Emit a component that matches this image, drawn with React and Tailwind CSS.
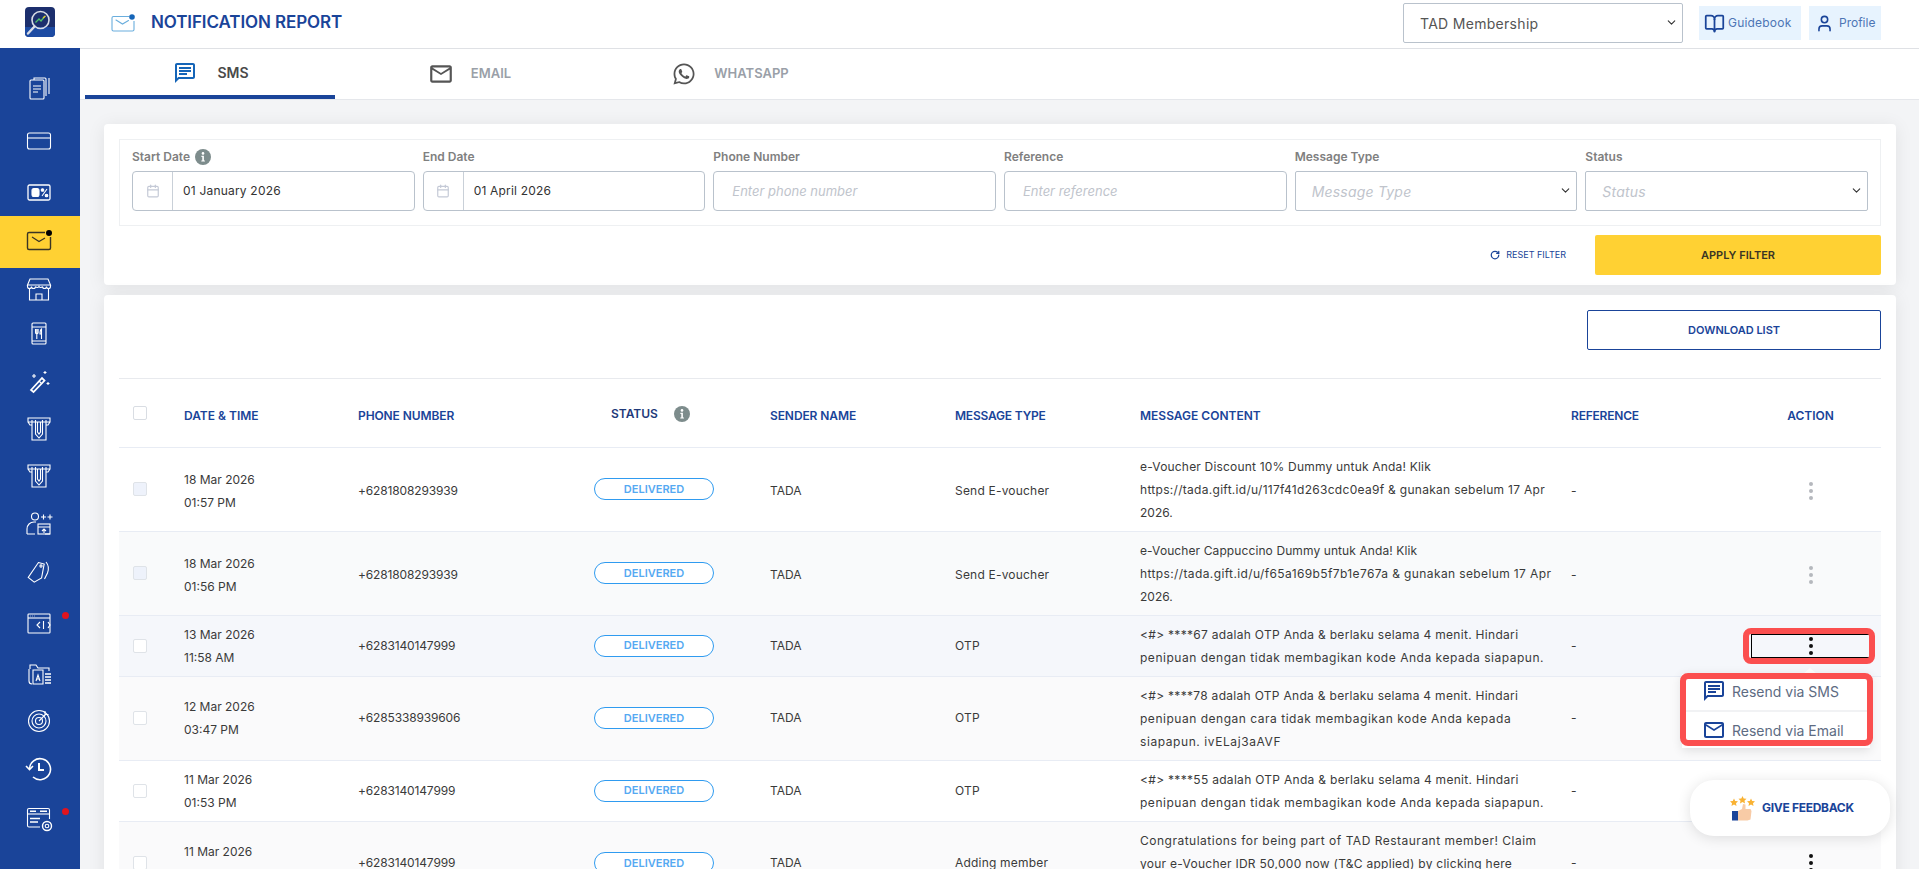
import { BookOpen, Calendar, ChevronDown, RotateCw, User } from "lucide-react";
import { FaWhatsapp } from "react-icons/fa";

const chatPath =
  "M20 2H4c-1.1 0-2 .9-2 2v18l4-4h14c1.1 0 2-.9 2-2V4c0-1.1-.9-2-2-2zm0 14H5.2L4 17.2V4h16v12zM6 12h8v2H6zM6 9h12v2H6zM6 6h12v2H6z";
const mailPath =
  "M20 4H4c-1.1 0-2 .9-2 2v12c0 1.1.9 2 2 2h16c1.1 0 2-.9 2-2V6c0-1.1-.9-2-2-2zm0 14H4V8l8 5 8-5v10zm-8-7L4 6h16l-8 5z";

function ChatIcon({ className }) {
  return (
    <svg viewBox="0 0 24 24" className={className} fill="currentColor">
      <path d={chatPath} fillRule="evenodd" />
    </svg>
  );
}

function MailIcon({ className }) {
  return (
    <svg viewBox="0 0 24 24" className={className} fill="currentColor">
      <path d={mailPath} />
    </svg>
  );
}

function InfoIcon({ className }) {
  return (
    <svg viewBox="0 0 16 16" className={className}>
      <circle cx="8" cy="8" r="8" fill="#7d8c8c" />
      <circle cx="8" cy="4.4" r="1.3" fill="#fff" />
      <path d="M6.4 6.8h2.5v4.6h1v1.2H6.3v-1.2h1V8H6.4z" fill="#fff" />
    </svg>
  );
}

function NotifMail({ stroke, dot, className }) {
  return (
    <svg viewBox="0 0 24 18" className={className} fill="none" stroke={stroke} strokeWidth="1.1">
      <path d="M18 2.5H2.5A1.5 1.5 0 0 0 1 4v11.5A1.5 1.5 0 0 0 2.5 17h19a1.5 1.5 0 0 0 1.500-1.500V7" />
      <path d="M5 6l6.500 4 6-3.500" strokeLinecap="round" />
      <circle cx="21" cy="3" r="2.800" fill={dot} stroke="none" />
    </svg>
  );
}

// Sidebar drawings, all on a 28 by 28 box
const sideIcons = [
  <>
    <rect x="5" y="6" width="14" height="19" rx="1" />
    <path d="M8 12h8M8 15h8M8 18h5" />
    <path d="M9 6V4h11a1 1 0 0 1 1 1v17M24 4v16" />
  </>,
  <>
    <rect x="2.500" y="6" width="23" height="16" rx="2" />
    <path d="M2.500 11h23" />
  </>,
  <>
    <rect x="3" y="7" width="22" height="15" rx="1.500" strokeWidth="1.300" />
    <rect x="7" y="10.500" width="7" height="8" rx="2" fill="#fff" />
    <path d="M17 18l5-7" />
    <circle cx="17.500" cy="12" r="1.300" fill="#fff" />
    <circle cx="21.500" cy="17.500" r="1.300" fill="#fff" />
  </>,
  <>
    <path d="M20 4.500H4A1.500 1.500 0 0 0 2.500 6v14A1.500 1.500 0 0 0 4 21.500h20a1.500 1.500 0 0 0 1.500-1.500V9" stroke="#3b3524" strokeWidth="1.400" />
    <path d="M7 9l7 4.500 6-3.500" stroke="#3b3524" strokeWidth="1.200" />
    <circle cx="24" cy="5" r="3" fill="#000" stroke="none" />
  </>,
  <>
    <path d="M5 4h18l2.500 6h-23zM2.500 10v1.500a2 2 0 0 0 4 0 2 2 0 0 0 4 0 2 2 0 0 0 3.500 0 2 2 0 0 0 3.500 0 2 2 0 0 0 4 0 2 2 0 0 0 4 0V10" />
    <path d="M4.500 14v11h19V14M11 25v-6h6v6" />
  </>,
  <>
    <rect x="7" y="3" width="14" height="21" rx="1" />
    <path d="M7 7h14M7 21h14M10.500 9v3.500a1.300 1.300 0 0 0 2.600 0V9M11.800 9v10M16.500 19V9c-1.500 1-1.500 4-1.500 5h1.500" />
  </>,
  <>
    <path d="M6 23l11-12 2.500 2.500L8.500 25z" strokeWidth="1.800" />
    <path d="M14 14l2.500 2.500" />
    <path d="M9 7v4M7 9h4M20 4v3M18.500 5.500h3M23 15v3M21.500 16.500h3" />
  </>,
  <>
    <path d="M3 4h22v4H3zM3 8l2 3h2M25 8l-2 3h-2" />
    <path d="M7 6v20h14V6" />
    <path d="M10.500 6v14l3.500 4 3.500-4V6M12.500 8v10l1.500 2 1.500-2V8" />
  </>,
  <>
    <path d="M3 4h22v4H3zM3 8l2 3h2M25 8l-2 3h-2" />
    <path d="M7 6v20h14V6" />
    <path d="M10.500 6v14l3.500 4 3.500-4V6M12.500 8v10l1.500 2 1.500-2V8" />
  </>,
  <>
    <circle cx="10" cy="7.500" r="3.500" />
    <path d="M2 25v-5c0-4 3-7 7-7h2M2 25h8M20 25h5" />
    <path d="M16 8h5M18.500 5.500v5M22.500 8h5M25 5.500v5" />
    <rect x="13" y="15" width="12" height="10" />
    <path d="M13 18h12M19 24v-4M17 22l2-2 2 2" />
  </>,
  <>
    <path d="M11 5h6v1l1 13-6 6-7-3z" transform="rotate(15 14 14)" />
    <circle cx="16" cy="8" r="1.100" />
    <path d="M21 4c2.500 3 3 7 1.500 11l-3 6" />
  </>,
  <>
    <rect x="3" y="5" width="22" height="19" rx="0.800" />
    <path d="M3 9h22" />
    <path d="M5 7h0.500M7 7h0.500M9 7h0.500" />
    <path d="M15 13l-3 3 3 3M23 13l2 3-2 3M18.500 12l0 8" />
  </>,
  <>
    <path d="M5 10V6h6l2 3h11v3M7 25a3 3 0 0 1-3-3V10" />
    <path d="M8 11h4l6 0v14H8z" />
    <path d="M11 22l2-6 2 6M11.700 20h2.600" />
    <path d="M20 15h6M20 18h6M20 21h6M20 24h6" strokeWidth="1.300" />
  </>,
  <>
    <circle cx="14" cy="14" r="10.500" />
    <circle cx="14" cy="14" r="7" />
    <circle cx="14" cy="14" r="3.500" />
    <path d="M14 14l7-7M20 4v3.500h3.500" />
  </>,
  <>
    <path d="M4.500 14A10.500 10.500 0 1 1 8 22" strokeWidth="1.600" />
    <path d="M1 11l3.500 3.500L8 11" strokeWidth="1.600" />
    <path d="M14 8v7h5" strokeWidth="2" />
  </>,
  <>
    <path d="M15 22H4a1.500 1.500 0 0 1-1.500-1.500V5A1.500 1.500 0 0 1 4 3.500h19A1.500 1.500 0 0 1 24.500 5v9" />
    <path d="M2.500 9h22" />
    <path d="M5 6.200h6M15 6.200h7M5 13.500h10M5 17h8" strokeWidth="1.500" />
    <circle cx="22" cy="21" r="4.500" strokeWidth="1.400" />
    <circle cx="22" cy="21" r="1.800" />
  </>,
];

const sideItems = [
  { h: "h-[54px]" },
  { h: "h-[52px]" },
  { h: "h-[49px]" },
  { h: "h-[52px]", active: true },
  { h: "h-[42px]" },
  { h: "h-[48px]" },
  { h: "h-[46px]" },
  { h: "h-[47px]" },
  { h: "h-[48px]" },
  { h: "h-[48px]" },
  { h: "h-[50px]" },
  { h: "h-[52px]", dot: true },
  { h: "h-[48px]" },
  { h: "h-[47px]" },
  { h: "h-[49px]" },
  { h: "h-[52px]", dot: true },
];

const rows = [
  {
    date: "18 Mar 2026",
    time: "01:57 PM",
    phone: "+6281808293939",
    type: "Send E-voucher",
    lines: [
      ["e-Voucher Discount 10% Dummy untuk Anda! Klik", "tracking-[0.19px]"],
      ["https://tada.gift.id/u/117f41d263cdc0ea9f & gunakan sebelum 17 Apr", "tracking-[0.29px]"],
      ["2026.", ""],
    ],
    height: "h-[84px]",
    bg: "bg-white",
    nudge: "pt-[3px]",
    disabled: true,
  },
  {
    date: "18 Mar 2026",
    time: "01:56 PM",
    phone: "+6281808293939",
    type: "Send E-voucher",
    lines: [
      ["e-Voucher Cappuccino Dummy untuk Anda! Klik", "tracking-[0.1px]"],
      ["https://tada.gift.id/u/f65a169b5f7b1e767a & gunakan sebelum 17 Apr", "tracking-[0.38px]"],
      ["2026.", ""],
    ],
    height: "h-[84px]",
    bg: "bg-[#f9fafb]",
    nudge: "pt-[3px]",
    disabled: true,
  },
  {
    date: "13 Mar 2026",
    time: "11:58 AM",
    phone: "+6283140147999",
    type: "OTP",
    lines: [
      ["<#> ****67 adalah OTP Anda & berlaku selama 4 menit. Hindari", "tracking-[0.3px]"],
      ["penipuan dengan tidak membagikan kode Anda kepada siapapun.", "tracking-[0.52px]"],
    ],
    height: "h-[61px]",
    bg: "bg-[#f5f7fb]",
    nudge: "",
    open: true,
  },
  {
    date: "12 Mar 2026",
    time: "03:47 PM",
    phone: "+6285338939606",
    type: "OTP",
    lines: [
      ["<#> ****78 adalah OTP Anda & berlaku selama 4 menit. Hindari", "tracking-[0.3px]"],
      ["penipuan dengan cara tidak membagikan kode Anda kepada", "tracking-[0.52px]"],
      ["siapapun. ivELaj3aAVF", "tracking-[0.58px]"],
    ],
    height: "h-[84px]",
    bg: "bg-[#fafafb]",
    nudge: "",
  },
  {
    date: "11 Mar 2026",
    time: "01:53 PM",
    phone: "+6283140147999",
    type: "OTP",
    lines: [
      ["<#> ****55 adalah OTP Anda & berlaku selama 4 menit. Hindari", "tracking-[0.3px]"],
      ["penipuan dengan tidak membagikan kode Anda kepada siapapun.", "tracking-[0.52px]"],
    ],
    height: "h-[61px]",
    bg: "bg-white",
    nudge: "",
  },
  {
    date: "11 Mar 2026",
    time: "\u00a0",
    phone: "+6283140147999",
    type: "Adding member",
    lines: [
      ["Congratulations for being part of TAD Restaurant member! Claim", "tracking-[0.5px]"],
      ["your e-Voucher IDR 50,000 now (T&C applied) by clicking here", "tracking-[0.27px]"],
      ["\u00a0", ""],
    ],
    height: "h-[84px]",
    bg: "bg-[#fafafb]",
    nudge: "",
  },
];

function Dots({ muted }) {
  const color = muted ? "bg-[#b5b8bd]" : "bg-[#111]";
  return (
    <span className="flex flex-col items-center gap-[3px]">
      <span className={`w-[4px] h-[4px] rounded-full ${color}`} />
      <span className={`w-[4px] h-[4px] rounded-full ${color}`} />
      <span className={`w-[4px] h-[4px] rounded-full ${color}`} />
    </span>
  );
}

function Sidebar() {
  return (
    <aside className="w-[80px] h-full shrink-0 flex flex-col bg-[#1a4499]">
      <div className="h-[48px] shrink-0 bg-white flex items-center justify-center">
        <svg viewBox="0 0 30 30" className="w-[30px] h-[30px] -ml-[1px] -mt-[4px]">
          <rect width="30" height="30" rx="4" fill="#1c2f6d" />
          <path d="M0 20h30v6a4 4 0 0 1-4 4H4a4 4 0 0 1-4-4z" fill="#1d4ba3" />
          <circle cx="15.500" cy="13" r="8.500" fill="none" stroke="#d9dde6" strokeWidth="1.600" />
          <path d="M9.500 19.500l-6.500 7" stroke="#d9dde6" strokeWidth="2.400" strokeLinecap="round" />
          <path d="M10.500 15.500l3.500-3.500 2 2 4-5" fill="none" stroke="#4fc26b" strokeWidth="1.300" />
          <path d="M18 11l2.500-2" stroke="#f2c530" strokeWidth="1.300" />
        </svg>
      </div>
      <nav className="pt-[13px] flex flex-col">
        {sideItems.map((item, i) => (
          <div
            key={i}
            className={`relative shrink-0 flex items-center justify-center ${item.h} ${
              item.active ? "bg-[#ffd133]" : ""
            }`}
          >
            <svg
              viewBox="0 0 28 28"
              className="w-[28px] h-[28px] -ml-[2px]"
              fill="none"
              stroke="#fff"
              strokeWidth="1.100"
            >
              {sideIcons[i]}
            </svg>
            {item.dot && (
              <span className="absolute left-[62px] top-[15px] w-[7px] h-[7px] rounded-full bg-[#e0141e]" />
            )}
          </div>
        ))}
      </nav>
    </aside>
  );
}

function Header() {
  return (
    <header className="h-[49px] shrink-0 bg-white border-b border-[#dfe1e5] flex items-center pl-[31px] pr-[38px] pb-[2px]">
      <NotifMail stroke="#6aaedd" dot="#1565b8" className="w-[24px] h-[18px]" />
      <h1 className="ml-[16px] text-[17px] font-semibold tracking-[-0.1px] text-[#1a4499]">
        NOTIFICATION REPORT
      </h1>
      <div className="ml-auto relative w-[280px] h-[40px]">
        <select className="w-full h-full appearance-none bg-white border border-[#b9c2cc] rounded-[2px] pl-[16px] text-[14px] tracking-[0.3px] text-[#555]">
          <option>TAD Membership</option>
        </select>
        <ChevronDown className="absolute right-[5px] top-[13px] w-[13px] h-[13px] text-[#333] pointer-events-none" />
      </div>
      <div className="ml-[16px] flex items-center h-[34px] w-[102px] bg-[#e7f3fe] pl-[5px] text-[12px] tracking-[0.2px] text-[#4d75b5] gap-[3px]">
        <BookOpen className="w-[21px] h-[21px] text-[#1a4499]" />
        Guidebook
      </div>
      <div className="ml-[8px] flex items-center h-[34px] w-[72px] bg-[#e7f3fe] pl-[6px] text-[12px] text-[#4d75b5] gap-[5px]">
        <User className="w-[19px] h-[19px] text-[#1a4499]" />
        Profile
      </div>
    </header>
  );
}

function Tabs() {
  return (
    <div className="h-[51px] shrink-0 bg-white border-b border-[#e5e7eb] flex pl-[5px] gap-[11px]">
      <div className="w-[250px] h-[50px] border-b-4 border-[#1a4499] flex items-center justify-center gap-[20px] pl-[2px] text-[14px] font-semibold text-[#4a4a4a] pt-[1px]">
        <ChatIcon className="w-[24px] h-[24px] text-[#1565b8]" />
        SMS
      </div>
      <div className="w-[250px] h-[50px] flex items-center justify-center gap-[17px] pr-[3px] pb-[1px] text-[13px] font-semibold text-[#9a9fa8]">
        <MailIcon className="w-[26px] h-[26px] text-[#555]" />
        EMAIL
      </div>
      <div className="w-[250px] h-[50px] flex items-center justify-center gap-[18px] pr-[3px] pb-[1px] text-[13px] font-semibold text-[#9a9fa8]">
        <FaWhatsapp className="w-[24px] h-[24px] text-[#555]" />
        WHATSAPP
      </div>
    </div>
  );
}

function DateField({ label, value, info }) {
  return (
    <div>
      <div className="h-[18px] mb-[5px] flex items-center gap-[5px] text-[12px] font-semibold text-[#808080]">
        {label}
        {info && <InfoIcon className="w-[16px] h-[16px]" />}
      </div>
      <div className="h-[40px] flex border border-[#b9c2cc] rounded-[4px]">
        <span className="w-[40px] shrink-0 border-r border-[#c9d0d8] flex items-center justify-center">
          <Calendar className="w-[14px] h-[14px] text-[#c4c9d6]" />
        </span>
        <input
          readOnly
          value={value}
          className="flex-1 min-w-0 pl-[10px] text-[12px] tracking-[0.2px] text-[#333] outline-none bg-transparent"
        />
      </div>
    </div>
  );
}

function TextField({ label, placeholder }) {
  return (
    <div>
      <div className="h-[18px] mb-[5px] flex items-center text-[12px] font-semibold text-[#808080]">
        {label}
      </div>
      <input
        placeholder={placeholder}
        className="w-full h-[40px] border border-[#b9c2cc] rounded-[4px] pl-[18px] text-[13px] italic placeholder:text-[#c0c4cc] outline-none"
      />
    </div>
  );
}

function SelectField({ label, placeholder }) {
  return (
    <div>
      <div className="h-[18px] mb-[5px] flex items-center text-[12px] font-semibold text-[#808080]">
        {label}
      </div>
      <div className="relative h-[40px]">
        <select className="w-full h-full appearance-none bg-white border border-[#b9c2cc] rounded-[2px] pl-[16px] text-[14px] tracking-[0.2px] italic text-[#c0c4cc]">
          <option>{placeholder}</option>
        </select>
        <ChevronDown className="absolute right-[5px] top-[13px] w-[13px] h-[13px] text-[#333] pointer-events-none" />
      </div>
    </div>
  );
}

function Filters() {
  return (
    <section className="h-[161px] shrink-0 bg-white rounded-[4px] shadow-[0_2px_18px_rgba(0,0,0,0.08)] px-[15px] pt-[15px]">
      <div className="h-[87px] border border-[#eef0f2] px-[12px] pt-[8px] grid grid-cols-6 gap-[8px]">
        <DateField label="Start Date" value="01 January 2026" info />
        <DateField label="End Date" value="01 April 2026" />
        <TextField label="Phone Number" placeholder="Enter phone number" />
        <TextField label="Reference" placeholder="Enter reference" />
        <SelectField label="Message Type" placeholder="Message Type" />
        <SelectField label="Status" placeholder="Status" />
      </div>
      <div className="mt-[9px] flex justify-end items-center">
        <span className="flex items-center gap-[6px] text-[9px] text-[#1a4499] mr-[29px]">
          <RotateCw className="w-[10px] h-[10px]" strokeWidth={3} />
          RESET FILTER
        </span>
        <button className="w-[286px] h-[40px] bg-[#ffd133] rounded-[2px] text-[11px] font-semibold text-[#3b3524]">
          APPLY FILTER
        </button>
      </div>
    </section>
  );
}

function ReportTable() {
  return (
    <table className="w-full table-fixed border-collapse text-[12px] text-[#3a3a3a]">
      <colgroup>
        <col className="w-[65px]" />
        <col className="w-[174px]" />
        <col className="w-[236px]" />
        <col className="w-[176px]" />
        <col className="w-[185px]" />
        <col className="w-[185px]" />
        <col className="w-[431px]" />
        <col className="w-[169px]" />
        <col className="w-[141px]" />
      </colgroup>
      <thead>
        <tr className="h-[68px] border-b border-[#e8ecf4] text-left text-[12px] font-semibold text-[#1a4499]">
          <th className="pl-[14px] pt-[6px] font-semibold">
            <span className="block w-[14px] h-[14px] border border-[#d9dde3] rounded-[2px] -mt-[5px]" />
          </th>
          <th className="pt-[6px] font-semibold">DATE &amp; TIME</th>
          <th className="pt-[6px] font-semibold tracking-[-0.1px]">PHONE NUMBER</th>
          <th className="pt-[6px] font-semibold">
            <span className="flex items-center gap-[16px] pl-[17px] -mt-[3px] text-[#1f3a7a]">
              STATUS
              <InfoIcon className="w-[16px] h-[16px]" />
            </span>
          </th>
          <th className="pt-[6px] font-semibold tracking-[-0.1px]">SENDER NAME</th>
          <th className="pt-[6px] font-semibold tracking-[-0.2px]">MESSAGE TYPE</th>
          <th className="pt-[6px] font-semibold">MESSAGE CONTENT</th>
          <th className="pt-[6px] font-semibold tracking-[-0.2px]">REFERENCE</th>
          <th className="pt-[6px] font-semibold text-center">ACTION</th>
        </tr>
      </thead>
      <tbody>
        {rows.map((row, i) => (
          <tr key={i} className={`${row.height} ${row.bg} border-b border-[#e8ecf4]`}>
            <td className="pl-[14px]">
              <span
                className={`block w-[14px] h-[14px] border border-[#dfe3e8] rounded-[2px] ${
                  row.disabled ? "bg-[#eef2fb]" : "bg-white"
                }`}
              />
            </td>
            <td className={`leading-[23px] ${row.nudge}`}>
              <div>{row.date}</div>
              <div>{row.time}</div>
            </td>
            <td className={`tracking-[-0.15px] ${row.nudge}`}>{row.phone}</td>
            <td>
              <span className="flex items-center justify-center w-[120px] h-[22px] border border-[#2f9bf0] rounded-full bg-white text-[11px] font-semibold text-[#55a9f2]">
                DELIVERED
              </span>
            </td>
            <td className={row.nudge}>TADA</td>
            <td className={`tracking-[0.2px] ${row.nudge}`}>{row.type}</td>
            <td className="leading-[23px] whitespace-nowrap">
              {row.lines.map(([text, track], j) => (
                <div key={j} className={track}>
                  {text}
                </div>
              ))}
            </td>
            <td className={row.nudge}>-</td>
            <td className={`text-center ${row.nudge}`}>
              <span
                className={`mx-auto flex items-center justify-center ${
                  row.open ? "w-[120px] h-[24px] border border-black" : ""
                }`}
              >
                <Dots muted={row.disabled} />
              </span>
            </td>
          </tr>
        ))}
      </tbody>
    </table>
  );
}

function ResendMenu() {
  return (
    <>
      {/* red marks drawn over the screenshot */}
      <div className="absolute left-[1743px] top-[628px] w-[132px] h-[36px] border-[6px] border-[#fb4f4f] rounded-[8px]" />
      <div className="absolute left-[1803px] top-[668px] w-0 h-0 border-x-[7px] border-x-transparent border-b-[6px] border-b-white" />
      <div className="absolute left-[1682px] top-[674px] w-[188px] h-[74px] bg-white shadow-[0_2px_10px_rgba(0,0,0,0.12)] text-[14px] text-[#5d6b82] overflow-hidden">
        <div className="h-[38px] pb-[2px] border-b-2 border-[#f1f2f4] flex items-center pl-[20px] gap-[6px]">
          <ChatIcon className="w-[24px] h-[24px] text-[#1a4499]" />
          Resend via SMS
        </div>
        <div className="h-[36px] flex items-center pl-[20px] gap-[6px]">
          <MailIcon className="w-[24px] h-[24px] text-[#1a4499]" />
          Resend via Email
        </div>
      </div>
      <div className="absolute left-[1680px] top-[673px] w-[193px] h-[73px] border-[6px] border-[#fb4f4f] rounded-[8px]" />
    </>
  );
}

function Feedback() {
  return (
    <div className="absolute left-[1690px] top-[780px] w-[200px] h-[56px] bg-white rounded-[24px] shadow-[0_2px_14px_rgba(0,0,0,0.12)] flex items-center pl-[40px] gap-[7px]">
      <svg viewBox="0 0 25 25" className="w-[25px] h-[25px]">
        <g fill="#f9b233">
          <polygon points="4,2.500 5.200,5 8,5.300 6,7.200 6.500,10 4,8.600 1.500,10 2,7.200 0,5.300 2.800,5" />
          <polygon points="12.500,0 13.700,2.500 16.500,2.800 14.500,4.700 15,7.500 12.500,6.100 10,7.500 10.500,4.700 8.500,2.800 11.300,2.500" />
          <polygon points="21,2.500 22.200,5 25,5.300 23,7.200 23.500,10 21,8.600 18.500,10 19,7.200 17,5.300 19.800,5" />
        </g>
        <rect x="2" y="15" width="6" height="9.500" fill="#1a4499" />
        <path d="M8 15l4-2 1-5 2.500.5v4.500h5l1 2-1 8.500-3 1H8z" fill="#f8cba6" />
      </svg>
      <span className="text-[12px] font-bold text-[#1a4499] tracking-[-0.3px]">GIVE FEEDBACK</span>
    </div>
  );
}

export default function App() {
  return (
    <div className="relative flex h-screen overflow-hidden bg-[#f3f4f6] [font-family:Inter,sans-serif]">
      <Sidebar />
      <main className="flex-1 min-w-0 h-full flex flex-col">
        <Header />
        <Tabs />
        <div className="flex-1 min-h-0 overflow-hidden pl-[24px] pr-[23px] pt-[24px] flex flex-col gap-[10px]">
          <Filters />
          <section className="flex-1 bg-white rounded-t-[4px] shadow-[0_2px_18px_rgba(0,0,0,0.08)] px-[15px] pt-[15px]">
            <div className="flex justify-end">
              <button className="w-[294px] h-[40px] border border-[#1a4499] rounded-[2px] text-[11px] font-semibold text-[#1a4499]">
                DOWNLOAD LIST
              </button>
            </div>
            <div className="mt-[28px] border-t border-[#e8eaee]" />
            <ReportTable />
          </section>
        </div>
      </main>
      <ResendMenu />
      <Feedback />
    </div>
  );
}
